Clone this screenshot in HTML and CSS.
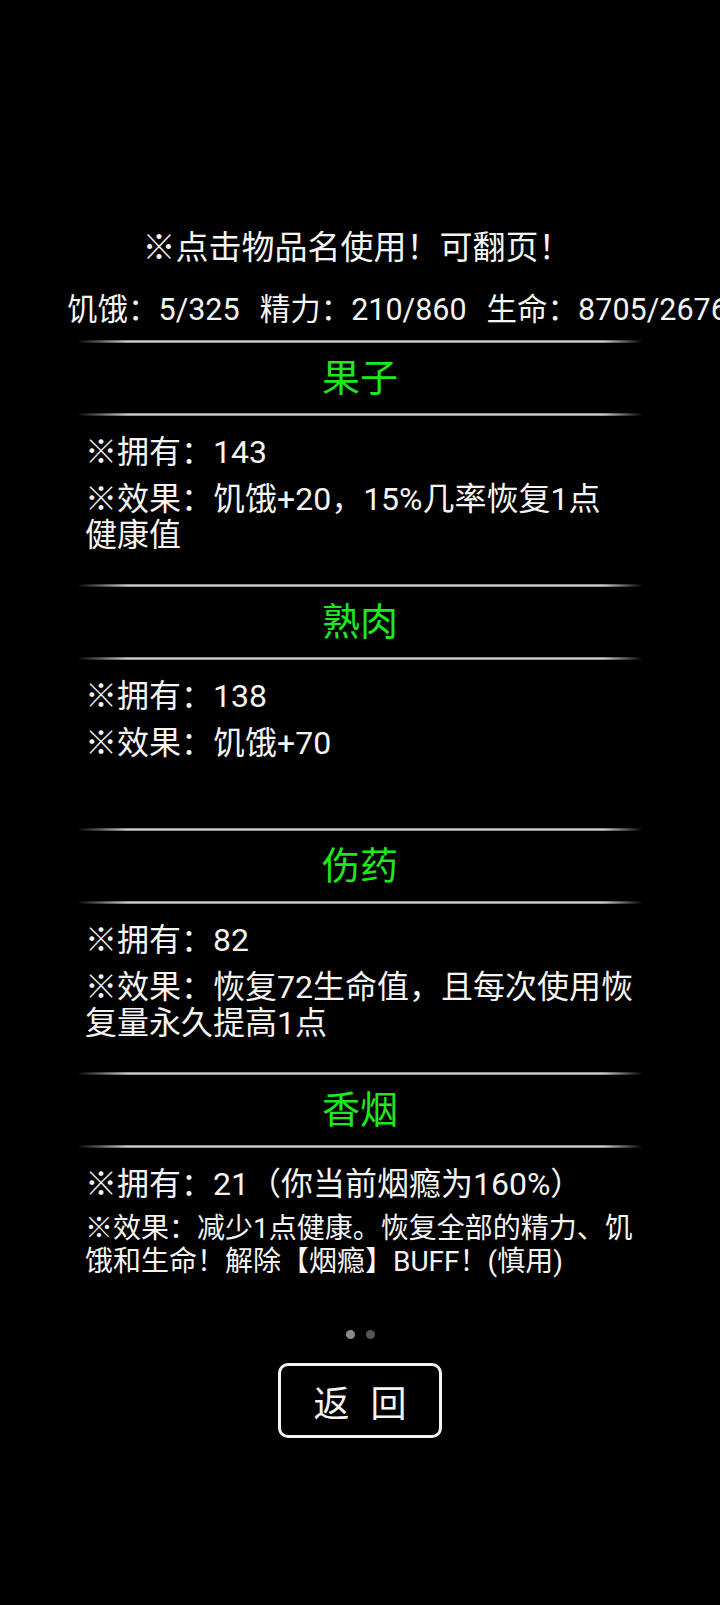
FILE: index.html
```html
<!DOCTYPE html>
<html lang="zh-CN">
<head>
<meta charset="utf-8">
<title>物品</title>
<link rel="stylesheet" href="styles.css">
</head>
<body>
<div class="page">
  <div class="hint">※点击物品名使用！可翻页！</div>
  <div class="stats">
    <span>饥饿：5/325</span>
    <span>精力：210/860</span>
    <span>生命：8705/2676</span>
  </div>

  <section class="item">
    <div class="divider"></div>
    <div class="name">果子</div>
    <div class="divider"></div>
    <div class="body">
      <div class="own">※拥有：143</div>
      <div class="effect">※效果：饥饿+20，15%几率恢复1点<br>健康值</div>
    </div>
  </section>

  <section class="item">
    <div class="divider"></div>
    <div class="name">熟肉</div>
    <div class="divider"></div>
    <div class="body">
      <div class="own">※拥有：138</div>
      <div class="effect">※效果：饥饿+70</div>
    </div>
  </section>

  <section class="item">
    <div class="divider"></div>
    <div class="name">伤药</div>
    <div class="divider"></div>
    <div class="body">
      <div class="own">※拥有：82</div>
      <div class="effect">※效果：恢复72生命值，且每次使用恢<br>复量永久提高1点</div>
    </div>
  </section>

  <section class="item">
    <div class="divider"></div>
    <div class="name">香烟</div>
    <div class="divider"></div>
    <div class="body">
      <div class="own">※拥有：21（你当前烟瘾为160%）</div>
      <div class="effect small">※效果：减少1点健康。恢复全部的精力、饥<br>饿和生命！解除【烟瘾】BUFF！(慎用)</div>
    </div>
  </section>

  <div class="dots">
    <span class="dot active"></span>
    <span class="dot"></span>
  </div>

  <div class="actions">
    <button class="back">返 回</button>
  </div>
</div>
</body>
</html>
```

FILE: styles.css
```css
html, body {
  margin: 0;
  padding: 0;
  background: #000;
}

body {
  font-family: Roboto, "Noto Sans CJK SC", sans-serif;
  color: #f4f4f4;
}

.page {
  width: 720px;
  height: 1605px;
  overflow: hidden;
  padding-top: 226px;
  box-sizing: border-box;
}

.hint {
  font-size: 33px;
  line-height: 44px;
  text-align: center;
  padding-right: 6px;
}

.stats {
  margin-top: 20px;
  padding-left: 67px;
  display: flex;
  gap: 20px;
  white-space: nowrap;
  font-size: 30.5px;
  line-height: 40px;
}

.stats span {
  flex: none;
}

.stats + .item {
  margin-top: 10px;
}

.item {
  display: flex;
  flex-direction: column;
}

.divider {
  height: 3px;
  margin: 0 77px;
  background: linear-gradient(to bottom, #555 0%, #d2d2d2 35%, #d2d2d2 65%, #555 100%);
  -webkit-mask-image: linear-gradient(to right, transparent 0%, #000 9%, #000 93%, transparent 100%);
  mask-image: linear-gradient(to right, transparent 0%, #000 9%, #000 93%, transparent 100%);
}

.name {
  height: 70px;
  line-height: 70px;
  text-align: center;
  font-size: 38px;
  color: #1fe81f;
}

.body {
  height: 168px;
  box-sizing: border-box;
  padding: 16px 0 0 85px;
  white-space: nowrap;
}

.own {
  font-size: 32px;
  line-height: 40px;
}

.effect {
  margin-top: 9px;
  font-size: 32px;
  line-height: 36px;
}

.effect.small {
  margin-top: 8px;
  font-size: 28px;
  line-height: 33px;
}

.dots {
  margin-top: 14px;
  display: flex;
  justify-content: center;
  gap: 11px;
}

.dot {
  width: 9px;
  height: 9px;
  border-radius: 50%;
  background: #555;
}

.dot.active {
  background: #8a8a8a;
}

.actions {
  margin-top: 24px;
  display: flex;
  justify-content: center;
}

.back {
  width: 164px;
  height: 75px;
  box-sizing: border-box;
  border: 3px solid #f4f4f4;
  border-radius: 10px;
  background: #000;
  color: #f4f4f4;
  font-family: Roboto, "Noto Sans CJK SC", sans-serif;
  font-size: 36px;
  word-spacing: 12px;
  padding: 0;
  cursor: pointer;
}
```
